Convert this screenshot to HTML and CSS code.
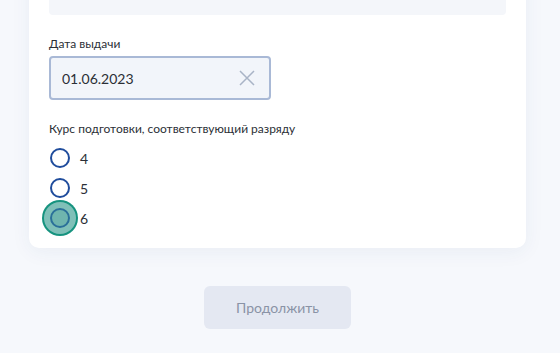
FILE: index.html
```html
<!DOCTYPE html>
<html lang="ru">
<head>
    <meta charset="UTF-8">
    <meta name="viewport" content="width=device-width, initial-scale=1.0">
    <title>Сведения о подготовке</title>
    <link rel="stylesheet" href="styles.css">
</head>
<body>
    <div class="page">
        <div class="form-card">
            <div class="field-readonly"></div>

            <div class="field">
                <label class="field-label" for="issue-date">Дата выдачи</label>
                <div class="date-input">
                    <input id="issue-date" type="text" value="01.06.2023">
                    <button class="clear-btn" type="button" aria-label="Очистить">
                        <svg width="16" height="16" viewBox="0 0 16 16">
                            <path d="M1 1 L15 15 M15 1 L1 15" stroke="#a9b4c6" stroke-width="1.5" fill="none"/>
                        </svg>
                    </button>
                </div>
            </div>

            <div class="field">
                <div class="field-label">Курс подготовки, соответствующий разряду</div>
                <div class="radio-group">
                    <label class="radio">
                        <span class="radio-mark"></span>
                        <span class="radio-text">4</span>
                    </label>
                    <label class="radio">
                        <span class="radio-mark"></span>
                        <span class="radio-text">5</span>
                    </label>
                    <label class="radio focused">
                        <span class="radio-mark"></span>
                        <span class="radio-text">6</span>
                    </label>
                </div>
            </div>
        </div>

        <div class="actions">
            <button class="continue-btn" type="button" disabled>Продолжить</button>
        </div>
    </div>
</body>
</html>
```

FILE: styles.css
```css
* {
    margin: 0;
    padding: 0;
    box-sizing: border-box;
    font-family: Lato, "Noto Sans", Arial, sans-serif;
}

body {
    background-color: #f6f8fc;
    overflow: hidden;
}

.page {
    width: 497px;
    margin: -53px 0 0 29px;
}

.form-card {
    background-color: #fff;
    border-radius: 10px;
    padding: 20px 20px 20px;
    box-shadow: 0 4px 20px rgba(30, 60, 120, 0.06);
}

.field-readonly {
    height: 48px;
    background-color: #f4f6fa;
    border-radius: 4px;
    margin-bottom: 21px;
}

.field {
    margin-bottom: 21px;
}

.field:last-child {
    margin-bottom: 0;
}

.field-label {
    display: block;
    font-size: 12px;
    line-height: 16px;
    color: #2b2f36;
    margin-bottom: 4px;
}

.date-input {
    display: flex;
    align-items: center;
    width: 222px;
    height: 44px;
    background-color: #f2f5fa;
    border: 2px solid #a9b9d6;
    border-radius: 4px;
    padding: 0 14px 0 11px;
}

.date-input input {
    flex: 1;
    min-width: 0;
    border: none;
    background: transparent;
    font-size: 14px;
    color: #2b2f36;
    outline: none;
}

.clear-btn {
    display: flex;
    border: none;
    background: none;
    cursor: pointer;
}

.radio-group {
    display: flex;
    flex-direction: column;
    gap: 10px;
    padding-top: 7px;
}

.radio {
    display: flex;
    align-items: center;
    height: 20px;
    cursor: pointer;
}

.radio-mark {
    width: 20px;
    height: 20px;
    margin-left: 1px;
    border: 2px solid #1f4c9c;
    border-radius: 50%;
    background-color: #fff;
}

/* focus ring on the keyboard-selected option */
.radio.focused .radio-mark {
    background-color: #6fb5ae;
    border-color: #2a7099;
    box-shadow: 0 0 0 6px #7fc0b8, 0 0 0 8px #16937f;
}

.radio-text {
    margin-left: 10px;
    font-size: 14px;
    color: #2b2f36;
}

.actions {
    display: flex;
    justify-content: center;
    padding-top: 38px;
}

.continue-btn {
    width: 147px;
    height: 43px;
    background-color: #e4e8f2;
    color: #8a93a6;
    border: none;
    border-radius: 6px;
    font-size: 14px;
}
```
